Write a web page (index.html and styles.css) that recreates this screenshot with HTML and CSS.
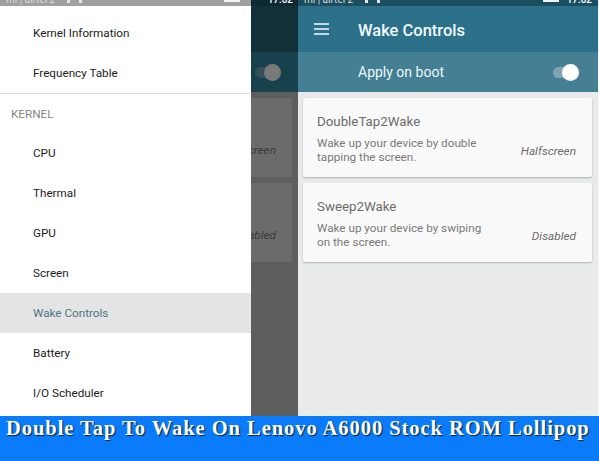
FILE: index.html
```html
<!DOCTYPE html>
<html lang="en">

<head>
    <meta charset="UTF-8">
    <meta name="viewport" content="width=device-width, initial-scale=1.0">
    <link rel="stylesheet" href="styles.css">
    <title>Double Tap To Wake</title>
</head>

<body>
    <div class="screens">
        <!-- Left phone, drawer open -->
        <div class="screen screen-left">
            <nav class="drawer">
                <div class="drawer-top">
                    <div class="statusbar statusbar-grey">
                        <span class="status-text">mi | airtel 2</span>
                        <span class="status-dot"></span>
                        <span class="status-dot"></span>
                        <span class="status-spacer"></span>
                        <span class="status-battery"></span>
                    </div>
                    <a class="nav-item nav-first">Kernel Information</a>
                    <a class="nav-item">Frequency Table</a>
                </div>
                <div class="nav-title">KERNEL</div>
                <a class="nav-item">CPU</a>
                <a class="nav-item">Thermal</a>
                <a class="nav-item">GPU</a>
                <a class="nav-item">Screen</a>
                <a class="nav-item nav-active">Wake Controls</a>
                <a class="nav-item">Battery</a>
                <a class="nav-item">I/O Scheduler</a>
            </nav>
            <div class="dimmed">
                <div class="statusbar statusbar-dim"><span class="status-time">17:02</span></div>
                <div class="dim-toolbar"></div>
                <div class="dim-apply">
                    <span class="switch switch-dim"><span class="switch-knob"></span></span>
                </div>
                <div class="dim-card"><span class="dim-value">Halfscreen</span></div>
                <div class="dim-card"><span class="dim-value">Disabled</span></div>
            </div>
        </div>

        <!-- Right phone -->
        <div class="screen screen-right">
            <div class="statusbar statusbar-teal">
                <span class="status-text">mi | airtel 2</span>
                <span class="status-dot"></span>
                <span class="status-dot"></span>
                <span class="status-spacer"></span>
                <span class="status-battery"></span>
                <span class="status-time">17:02</span>
            </div>
            <header class="toolbar">
                <svg class="menu-icon" width="15" height="12" viewBox="0 0 15 12">
                    <path d="M0 1h15M0 6h15M0 11h15" stroke="#f2fbfd" stroke-width="1.700" fill="none"/>
                </svg>
                <h1 class="toolbar-title">Wake Controls</h1>
            </header>
            <div class="apply-bar">
                <span class="apply-label">Apply on boot</span>
                <span class="switch"><span class="switch-knob"></span></span>
            </div>
            <div class="cards">
                <div class="card">
                    <div class="card-text">
                        <div class="card-title">DoubleTap2Wake</div>
                        <div class="card-desc">Wake up your device by double tapping the screen.</div>
                    </div>
                    <span class="card-value">Halfscreen</span>
                </div>
                <div class="card">
                    <div class="card-text">
                        <div class="card-title">Sweep2Wake</div>
                        <div class="card-desc">Wake up your device by swiping on the screen.</div>
                    </div>
                    <span class="card-value">Disabled</span>
                </div>
            </div>
        </div>
    </div>

    <footer class="caption">Double Tap To Wake On Lenovo A6000 Stock ROM Lollipop</footer>
</body>

</html>
```

FILE: styles.css
```css
html, body {
    margin: 0;
    padding: 0;
}

body {
    width: 599px;
    height: 461px;
    overflow: hidden;
    display: flex;
    flex-direction: column;
    font-family: 'Roboto', sans-serif;
    background-color: #0a7bfb;
}

.screens {
    display: flex;
    height: 416px;
    background-color: #f4f6f6;
}

.screen {
    height: 416px;
    overflow: hidden;
}

.screen-left {
    width: 298px;
    display: flex;
}

.screen-right {
    width: 300px;
    background-color: #e9ebeb;
}

.statusbar {
    height: 6px;
    display: flex;
    align-items: flex-start;
    overflow: hidden;
    font-size: 10px;
    line-height: 6px;
    color: #eef;
}

.statusbar-grey {
    background-color: #a0a0a0;
}

.statusbar-dim {
    background-color: #0d2a33;
    justify-content: flex-end;
    padding-right: 5px;
}

.statusbar-teal {
    background-color: #1b4f60;
}

.status-text {
    margin: -3px 0 0 6px;
    width: 52px;
    white-space: nowrap;
    color: #d8d8d8;
}

.status-time {
    margin-top: -3px;
    font-weight: 500;
    color: #fff;
}

.status-dot {
    width: 3px;
    height: 3px;
    margin-left: 9px;
    background-color: #e6e6e6;
}

.status-spacer {
    flex: 1;
}

.status-battery {
    width: 16px;
    height: 2px;
    background-color: #f2f2f2;
}

.statusbar-grey .status-battery {
    margin-right: 11px;
}

.statusbar-teal .status-battery {
    margin-right: 8px;
}

.statusbar-teal .status-time {
    margin-right: 6px;
}

/* drawer */
.drawer {
    width: 251px;
    flex-shrink: 0;
    background-color: #fff;
}

.drawer-top {
    border-bottom: 1px solid #ddd;
}

.nav-item {
    display: flex;
    align-items: center;
    height: 40px;
    padding-left: 33px;
    font-size: 11.700px;
    color: #1c1c1c;
}

.nav-first {
    margin-top: 7px;
}

.nav-title {
    display: flex;
    align-items: center;
    height: 39px;
    padding-left: 11px;
    font-size: 11.700px;
    color: #858585;
}

.nav-active {
    background-color: #e4e4e4;
    color: #4d7384;
}

/* dimmed part of left phone */
.dimmed {
    flex: 1;
    min-width: 0;
    background-color: #5d5e5e;
    overflow: hidden;
}

.dim-toolbar {
    height: 46px;
    background-color: #123038;
}

.dim-apply {
    height: 40px;
    background-color: #18414e;
    display: flex;
    align-items: center;
    justify-content: flex-end;
    padding-right: 17px;
}

.dim-card {
    height: 79px;
    margin: 6px 6px 0 0;
    background-color: #6a6b6b;
    display: flex;
    align-items: center;
    justify-content: flex-end;
    padding-right: 16px;
    overflow: hidden;
}

.dim-value {
    flex-shrink: 0;
    margin-top: 25px;
    font-size: 11.800px;
    font-style: italic;
    color: #3a3a3a;
    white-space: nowrap;
}

/* right phone */
.toolbar {
    height: 46px;
    display: flex;
    align-items: center;
    background-color: #2c7189;
}

.menu-icon {
    margin-left: 16px;
}

.toolbar-title {
    margin: 2px 0 0 29px;
    font-size: 16.500px;
    font-weight: 500;
    color: #f0fafc;
}

.apply-bar {
    height: 40px;
    display: flex;
    align-items: center;
    justify-content: space-between;
    padding: 0 19px 0 60px;
    background-color: #447f94;
}

.apply-label {
    font-size: 14px;
    color: #eef7fa;
}

.switch {
    position: relative;
    display: block;
    width: 26px;
    height: 11px;
    border-radius: 6px;
    background-color: #7fa3b1;
}

.switch-dim {
    background-color: #33505a;
}

.switch-knob {
    position: absolute;
    right: 0;
    top: -3px;
    width: 17px;
    height: 17px;
    border-radius: 50%;
    background-color: #fff;
}

.switch-dim .switch-knob {
    background-color: #7a7a7a;
}

.cards {
    padding: 6px 6px 0 5px;
}

.card {
    height: 79px;
    box-sizing: border-box;
    margin-bottom: 6px;
    padding: 2px 16px 0 14px;
    display: flex;
    align-items: center;
    justify-content: space-between;
    background-color: #f9f9f9;
    border-radius: 2px;
    box-shadow: 0 1px 2px rgba(0, 0, 0, 0.25);
}

.card-text {
    width: 172px;
}

.card-title {
    font-size: 13.300px;
    color: #6c6c6c;
    margin-bottom: 7px;
}

.card-desc {
    font-size: 11.700px;
    line-height: 14px;
    color: #7a7a7a;
}

.card-value {
    margin-top: 24px;
    font-size: 11.800px;
    font-style: italic;
    color: #6c6c6c;
}

/* blue caption */
.caption {
    height: 45px;
    padding: 1px 0 0 6px;
    box-sizing: border-box;
    font-family: 'Liberation Serif', serif;
    font-size: 20.500px;
    font-weight: bold;
    letter-spacing: 0.950px;
    color: #fff;
    text-shadow: 1px 1px 1px #123;
    white-space: nowrap;
}
```
